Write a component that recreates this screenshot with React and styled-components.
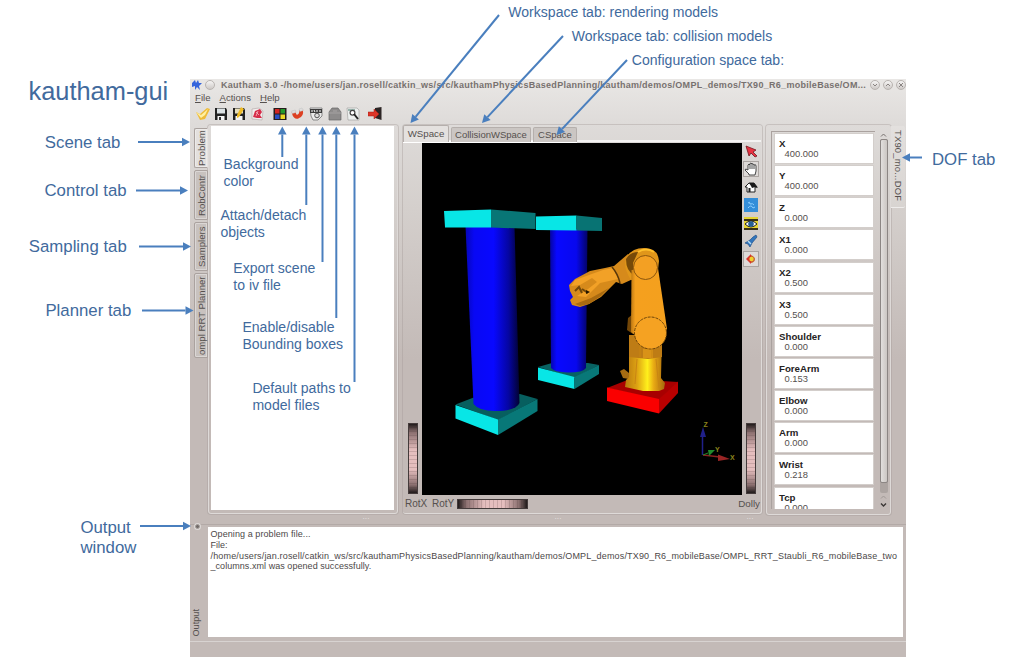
import React from 'react';
import styled, { createGlobalStyle, css } from 'styled-components';

const GlobalStyle = createGlobalStyle`
  * { box-sizing: border-box; }
  body { margin: 0; background: #fff; font-family: "Liberation Sans", Arial, sans-serif; }
`;

const Slide = styled.main`
  position: relative;
  width: 1009px;
  height: 661px;
  padding: 79px 0 0 190px;
  background: #fff;
  overflow: hidden;
`;

const Window = styled.section`
  width: 716px;
  height: 578px;
  display: flex;
  flex-direction: column;
  background: linear-gradient(#e9e7e5 0, #dedbd9 45px, #d4cfcc 130px, #c3bab7 280px, #c3bab7 100%);
  color: #55504e;
  font-size: 10px;
`;

const TitleBar = styled.header`
  height: 13px;
  display: flex;
  align-items: center;
  padding: 0 0 1px;
`;

const TitleText = styled.span`
  flex: 1;
  margin-left: 5px;
  font-size: 9px;
  line-height: 11px;
  font-weight: 700;
  letter-spacing: ${(p) => p.$track}px;
  white-space: nowrap;
  color: #77716f;
`;

const RoundButton = styled.span`
  width: 10px;
  height: 10px;
  flex: none;
  margin-right: ${(p) => p.$gap ?? 3}px;
  display: grid;
  place-items: center;
  border-radius: 50%;
  border: 1px solid #b9b4b1;
  background: linear-gradient(#f6f5f4, #cdc9c6);
`;

const MenuBar = styled.nav`
  height: 14px;
  display: flex;
  gap: 9px;
  padding-left: 5px;
  font-size: 9.6px;
  line-height: 12px;
`;

const Mnemonic = styled.span`
  text-decoration: underline;
`;

const MenuItem = styled.span`
  letter-spacing: ${(p) => p.$track || 0}px;
`;

const ToolBar = styled.div`
  height: 19px;
  display: flex;
  align-items: center;
  padding: 0 0 3px 6px;
`;

const ToolIcon = styled.svg`
  width: 14px;
  height: 14px;
  margin-right: ${(p) => p.$gap ?? 4}px;
  flex: none;
`;

const Main = styled.div`
  height: 392px;
  display: flex;
`;

const SideTabs = styled.div`
  width: 18px;
  padding: 3px 0 0 4px;
  display: flex;
  flex-direction: column;
  gap: 2px;
`;

const verticalText = css`
  writing-mode: vertical-rl;
  white-space: nowrap;
  font-size: 10px;
  line-height: 13px;
`;

const SideTab = styled.div`
  ${verticalText}
  transform: rotate(180deg);
  width: 14px;
  height: ${(p) => p.$h}px;
  font-size: 9.6px;
  text-align: center;
  letter-spacing: ${(p) => p.$track || 0}px;
  border: 1px solid #aaa29f;
  border-left-color: ${(p) => (p.$active ? '#e6e3e1' : '#aaa29f')};
  border-radius: 0 2px 2px 0;
  background: ${(p) => (p.$active ? '#e3e0de' : '#c8c2bf')};
  box-shadow: inset 0 0 0 1px rgba(255, 255, 255, 0.35);
`;

const frame = css`
  border: 1px solid #dedad8;
  box-shadow: 0 0 0 1px rgba(165, 155, 152, 0.4);
  border-radius: 3px;
`;

const ProblemPane = styled.div`
  ${frame}
  width: 190px;
  height: 389px;
  padding: 0 3px 3px 2px;
`;

const WhiteSheet = styled.div`
  width: 100%;
  height: 100%;
  background: #fff;
`;

const ViewPane = styled.div`
  ${frame}
  width: 359px;
  height: 389px;
  margin-left: 5px;
  display: flex;
  flex-direction: column;
  border-width: 0 1px 1px 0;
`;

const TabRow = styled.div`
  height: 18px;
  display: flex;
  align-items: flex-end;
  gap: 2px;
  background: linear-gradient(#fff, #fff) 0 bottom / 174px 2px no-repeat,
    linear-gradient(#f4f3f2, #f4f3f2) 0 15px / 100% 2px no-repeat;
`;

const ViewTab = styled.div`
  height: ${(p) => (p.$active ? 17 : 15)}px;
  width: ${(p) => p.$w}px;
  margin-bottom: 1px;
  font-size: ${(p) => p.$size || 9.7}px;
  line-height: ${(p) => (p.$active ? 16 : 14)}px;
  text-align: center;
  white-space: nowrap;
  border: 1px solid #b5afac;
  border-bottom: 0;
  border-radius: 2px 2px 0 0;
  background: ${(p) => (p.$active ? '#e4e1df' : '#cbc6c3')};
`;

const ViewBody = styled.div`
  display: flex;
  height: 352px;
`;

const Rail = styled.div`
  width: ${(p) => p.$w}px;
  display: flex;
  flex-direction: column;
  align-items: center;
  justify-content: space-between;
  padding-bottom: 1px;
`;

const ViewTools = styled.div`
  display: flex;
  flex-direction: column;
  gap: 2px;
`;

const ViewTool = styled.div`
  width: 16px;
  height: 16px;
  display: grid;
  place-items: center;
  border: 1px solid ${(p) => (p.$pressed ? '#aaa4a1' : 'transparent')};
  background: ${(p) => (p.$pressed ? '#dedad8' : 'transparent')};
  svg { width: 14px; height: 14px; }
`;

const ThumbWheel = styled.div`
  width: ${(p) => (p.$flat ? 71 : 10)}px;
  height: ${(p) => (p.$flat ? 10 : 71)}px;
  border: 1px solid #443b3b;
  background:
    linear-gradient(${(p) => (p.$flat ? '90deg' : '180deg')}, #211b1b 0, rgba(80, 60, 60, 0.6) 12%, transparent 38%, transparent 66%, rgba(80, 60, 60, 0.6) 88%, #211b1b 100%),
    repeating-linear-gradient(${(p) => (p.$flat ? '90deg' : '180deg')}, #e5bebe 0 3px, #c9a5a5 3px 4px);
`;

const Scene = styled.svg`
  width: 320px;
  height: 352px;
  display: block;
  background: #000;
`;

const ViewFooter = styled.div`
  flex: 1;
  display: flex;
  align-items: center;
  padding: 0 1px 1px 2px;
  font-size: 10.2px;
`;

const FooterLabel = styled.span`
  width: ${(p) => p.$w}px;
  margin-left: ${(p) => (p.$end ? 'auto' : 0)};
  font-size: ${(p) => (p.$end ? 9.8 : 10)}px;
  text-align: ${(p) => (p.$end ? 'right' : 'left')};
`;

const DofPane = styled.div`
  ${frame}
  width: 125px;
  height: 390px;
  margin-left: 4px;
  padding: 5px 2px 6px 4px;
  display: flex;
  gap: 4px;
`;

const DofList = styled.div`
  width: 105px;
  height: 378px;
  padding: 2px 2px 2px 3px;
  border: 1px solid #aaa29f;
  border-width: 1px 0 0 1px;
  display: flex;
  flex-direction: column;
  gap: 3.15px;
  overflow: hidden;
`;

const DofCard = styled.div`
  flex: none;
  height: 29px;
  padding: 4px 0 0 4px;
  background: #fff;
  box-shadow: 0 0 0 1px #d3cecb;
`;

const DofName = styled.div`
  font-size: 9.7px;
  line-height: 11px;
  font-weight: 700;
  color: #262323;
`;

const DofValue = styled.div`
  padding-left: 5.5px;
  font-size: 9.4px;
  line-height: 10px;
`;

const ScrollBar = styled.div`
  width: 9px;
  height: 378px;
  display: flex;
  flex-direction: column;
  align-items: center;
  justify-content: space-between;
`;

const ScrollTrack = styled.div`
  width: 8px;
  flex: 1;
  padding-bottom: 10px;
  border-radius: 2px;
  background: #aca4a1;
`;

const ScrollThumb = styled.div`
  height: 100%;
  border: 1px solid #8c8684;
  border-radius: 2px;
  background: linear-gradient(90deg, #e2dfdd, #cbc6c3);
`;

const Chevron = styled.svg`
  width: 7px;
  height: 6px;
  margin: 1px 0;
`;

const DofTab = styled.div`
  ${verticalText}
  width: 14px;
  height: 81px;
  margin: 1px 0 0;
  padding-top: 4px;
  font-size: 9.4px;
  letter-spacing: 0.22px;
  border-radius: 0 2px 2px 0;
  background: linear-gradient(#e3e0de, #d8d4d1);
  box-shadow: 0 1px 0 #eeeceb;
`;

const Splitter = styled.div`
  height: 8px;
  display: flex;
  justify-content: space-around;
  border-bottom: 1px solid #b3aaa7;
  padding: 0 60px 0 80px;
  font-size: 7px;
  line-height: 3px;
  color: #eeeae8;
`;

const OutputDock = styled.div`
  height: 117px;
  display: flex;
  padding: 2px 3px 4px 0;
  border-bottom: 1px solid #d8d3d1;
`;

const OutputSide = styled.div`
  width: 17.5px;
  display: flex;
  flex-direction: column;
  justify-content: space-between;
`;

const DockButton = styled.span`
  width: 5px;
  height: 5px;
  margin: -3px 0 0 4.5px;
  border-radius: 50%;
  background: #716b69;
  border: 1px solid #a39d9a;
  box-shadow: 0 0 0 1px #dcd8d6;
`;

const OutputTitle = styled.div`
  ${verticalText}
  transform: rotate(180deg);
  font-size: 9.2px;
`;

const OutputText = styled.div`
  flex: 1;
  padding: 2px 3px;
  background: #fff;
  color: #4c4848;
  font-size: 9px;
  line-height: 10.8px;
`;

const OutputLine = styled.div`
  white-space: nowrap;
  letter-spacing: ${(p) => p.$track || 0}px;
`;

const Callout = styled.div`
  position: absolute;
  left: ${(p) => p.$x}px;
  top: ${(p) => p.$y}px;
  font-size: ${(p) => p.$size}px;
  line-height: ${(p) => p.$lh}px;
  white-space: pre;
  color: #416a9d;
`;

const ArrowLayer = styled.svg`
  position: absolute;
  left: 0;
  top: 0;
  width: 1009px;
  height: 661px;
  pointer-events: none;
`;

const dofs = [
  ['X', '400.000'], ['Y', '400.000'], ['Z', '0.000'], ['X1', '0.000'],
  ['X2', '0.500'], ['X3', '0.500'], ['Shoulder', '0.000'], ['ForeArm', '0.153'],
  ['Elbow', '0.000'], ['Arm', '0.000'], ['Wrist', '0.218'], ['Tcp', '0.000'],
];

const callouts = [
  { x: 28.5, y: 75, size: 25.4, lh: 32, text: 'kautham-gui' },
  { x: 44.8, y: 132.5, size: 16.8, lh: 20, text: 'Scene tab' },
  { x: 44.5, y: 180.5, size: 16.8, lh: 20, text: 'Control tab' },
  { x: 28.8, y: 237, size: 16.8, lh: 20, text: 'Sampling tab' },
  { x: 45.4, y: 300.5, size: 16.8, lh: 20, text: 'Planner tab' },
  { x: 80.4, y: 517.5, size: 16.8, lh: 20, text: 'Output\nwindow' },
  { x: 932, y: 149.5, size: 16.8, lh: 20, text: 'DOF tab' },
  { x: 508.3, y: 4, size: 14.05, lh: 17, text: 'Workspace tab: rendering models' },
  { x: 571.8, y: 28, size: 14.05, lh: 17, text: 'Workspace tab: collision models' },
  { x: 631.8, y: 52, size: 14.05, lh: 17, text: 'Configuration space tab:' },
  { x: 223.5, y: 156, size: 14.05, lh: 17, text: 'Background\ncolor' },
  { x: 220.4, y: 207, size: 14.05, lh: 17, text: 'Attach/detach\nobjects' },
  { x: 233.3, y: 259.5, size: 14.05, lh: 17, text: 'Export scene\nto iv file' },
  { x: 242.4, y: 319, size: 14.05, lh: 17, text: 'Enable/disable\nBounding boxes' },
  { x: 252.4, y: 379.5, size: 14.05, lh: 17, text: 'Default paths to\nmodel files' },
];

const arrows = [
  [138, 142, 190, 142], [136, 190.5, 188, 190.5], [139, 246.5, 191, 246.5],
  [142, 310.5, 193.5, 310.5], [140, 526, 191, 526], [922, 157.5, 902, 157.5],
  [499, 15, 410.5, 123], [563, 36, 482, 123], [627, 60, 556.5, 135],
  [282.3, 157, 282.3, 126.5], [306.3, 205, 306.3, 126.5], [322.5, 262, 322.5, 126.5],
  [336.3, 318, 336.3, 126.5], [354.5, 382, 354.5, 126.5],
];

function Arrow({ from }) {
  const [x1, y1, x2, y2] = from;
  const len = Math.hypot(x2 - x1, y2 - y1);
  const ux = (x2 - x1) / len;
  const uy = (y2 - y1) / len;
  const bx = x2 - ux * 8;
  const by = y2 - uy * 8;
  return (
    <g>
      <line x1={x1} y1={y1} x2={bx} y2={by} stroke="#4a7fbe" strokeWidth="2" />
      <polygon fill="#4a7fbe" points={`${x2},${y2} ${bx - uy * 4.3},${by + ux * 4.3} ${bx + uy * 4.3},${by - ux * 4.3}`} />
    </g>
  );
}

function ToolbarIcons() {
  return (
    <>
      <ToolIcon viewBox="0 0 14 14" $gap={4}>
        <path d="M0 5 L4 7 L11 1 L14 2 L9 12 L4 13 Z" fill="#eebb38" />
        <path d="M0 5 L5 8 L12 2 L9 8 L5 11 Z" fill="#fff0a2" />
      </ToolIcon>
      <ToolIcon viewBox="0 0 14 14">
        <path d="M1 1H12L13 3V13H1Z" fill="#222" />
        <rect x="3" y="1.5" width="8" height="5" fill="#dce2e4" />
        <rect x="3.5" y="9" width="7" height="4" fill="#f5f5f5" />
        <rect x="5" y="10" width="2" height="3" fill="#333" />
      </ToolIcon>
      <ToolIcon viewBox="0 0 14 14">
        <path d="M1 1H12L13 3V13H1Z" fill="#222" />
        <rect x="3" y="1.5" width="8" height="5" fill="#e7dfbd" />
        <rect x="3.500" y="9" width="7" height="4" fill="#f5f5f5" />
        <path d="M9 0L12 2L7 10L5 11L5 8Z" fill="#f0bc25" />
      </ToolIcon>
      <ToolIcon viewBox="0 0 14 14" $gap={9}>
        <path d="M2 2L9 1L13 4L12 13L2 12Z" fill="#f1eded" stroke="#b8aeae" strokeWidth=".7" />
        <path d="M5 4L10 2L12 5L10 8L12 11L7 11L3 10L4 7Z" fill="#d62d49" />
        <path d="M6 5L9 8M8 4L6 9" stroke="#f6b9c2" strokeWidth=".8" />
      </ToolIcon>
      <ToolIcon viewBox="0 0 14 14">
        <rect x=".5" y="1" width="13" height="12" fill="#241c1c" />
        <rect x="2" y="2" width="4.500" height="4.500" fill="#d32522" />
        <rect x="7.500" y="2" width="4.500" height="4.500" fill="#239a2b" />
        <rect x="2" y="7.500" width="4.500" height="4.500" fill="#294fc4" />
        <rect x="7.500" y="7.500" width="4.500" height="4.500" fill="#ead825" />
      </ToolIcon>
      <ToolIcon viewBox="0 0 14 14">
        <path d="M2.500 5Q4 11 7 9.500Q11 8 10 3" fill="none" stroke="#dd4022" strokeWidth="3.800" />
        <path d="M.5 4L4.300 3L5 5.500L1.200 6.600ZM8 2L11 1L12.500 3.400L8.800 4.500Z" fill="#ddd" stroke="#bbb" strokeWidth=".4" />
      </ToolIcon>
      <ToolIcon viewBox="0 0 14 14" $gap={5}>
        <path d="M1 1H13V9L9 13H4L2 9Z" fill="#ebebeb" stroke="#888" />
        <path d="M1 2H13V6H1Z" fill="#3b3b3b" />
        <path d="M3 3V5M5 3L6 5M8 3V5M11 3V5" stroke="#fff" />
        <circle cx="8" cy="8.500" r="2.300" fill="#ddd" stroke="#555" />
      </ToolIcon>
      <ToolIcon viewBox="0 0 14 14">
        <path d="M4 1H10L13 5V13H1V5Z" fill="#8d8b8b" stroke="#696767" strokeWidth=".7" />
        <path d="M1 6H13M5 4H9" stroke="#a6a3a3" />
      </ToolIcon>
      <ToolIcon viewBox="0 0 14 14" $gap={8}>
        <path d="M1 1H11L13 3V13H2Z" fill="#edf0ef" stroke="#9b9b98" strokeWidth=".6" />
        <path d="M2 3H9" stroke="#7a9f94" strokeWidth="1.500" />
        <circle cx="6.500" cy="5.800" r="2.400" fill="#fff" stroke="#444" strokeWidth="1.200" />
        <path d="M8 7L12 12" stroke="#222" strokeWidth="2" />
      </ToolIcon>
      <ToolIcon viewBox="0 0 14 14">
        <path d="M7 1L13.500 0V13L7 11Z" fill="#2c2525" />
        <path d="M0 5H6V2L11 7L6 12V9H0Z" fill="#dd3528" stroke="#a51d17" strokeWidth=".5" />
      </ToolIcon>
    </>
  );
}

function ViewerTools() {
  return (
    <ViewTools>
      <ViewTool>
        <svg viewBox="0 0 14 14"><path d="M2 2L12 6L9 8L13 12L11 13L7 9L5 12Z" fill="#e83241" stroke="#6e1820" strokeWidth=".8" /></svg>
      </ViewTool>
      <ViewTool $pressed>
        <svg viewBox="0 0 14 14"><path d="M5 12L1 8Q1 6 4 8V3Q5 1 6 3V1.500Q7 .3 8 2Q9 .8 10 3Q12 2 12 4V9L11 13H5ZM6 3V7M8 2V7M10 3V7" fill="#fff" stroke="#333" strokeWidth=".9" /></svg>
      </ViewTool>
      <ViewTool>
        <svg viewBox="0 0 14 14"><path d="M1 7L5 3H10L13 7L11 7V12H3V7Z" fill="#fff" stroke="#222" /><path d="M5 3H10L14 8L11 7L8 8L7 6Z" fill="#181818" /><rect x="4.500" y="8" width="2" height="4" fill="#222" /></svg>
      </ViewTool>
      <ViewTool>
        <svg viewBox="0 0 14 14"><rect width="14" height="14" fill="#348ed9" /><path d="M4 5Q6 3 6 6Q9 5 10 7M4 10Q7 6 9 10L11 9" fill="none" stroke="#8fd0ff" /></svg>
      </ViewTool>
      <ViewTool>
        <svg viewBox="0 0 14 14"><rect y="1" width="14" height="12" fill="#e5d331" /><path d="M0 3H14V5H0ZM0 12H14V14H0Z" fill="#373015" /><path d="M1 8Q7 2 13 8Q7 14 1 8Z" fill="#fff" stroke="#222" /><circle cx="7" cy="8" r="2.800" fill="#245f96" /></svg>
      </ViewTool>
      <ViewTool>
        <svg viewBox="0 0 14 14"><path d="M12 1L13 3L8 9L6 13L4 10L1 9L6 6L9 3Z" fill="#3176bd" stroke="#235086" strokeWidth=".7" /><path d="M4 7L7 10" stroke="#b6dcf4" strokeWidth="1.500" /></svg>
      </ViewTool>
      <ViewTool $pressed>
        <svg viewBox="0 0 14 14"><path d="M2 7L7 2V12Z" fill="#d9352c" /><path d="M7 3Q11 5 11 7Q11 10 7 11Z" fill="#c9602e" /><circle cx="7.500" cy="7" r="2.200" fill="#efd22f" /></svg>
      </ViewTool>
    </ViewTools>
  );
}

function RobotScene() {
  return (
    <Scene viewBox="422 143 320 352">
      <defs>
        <linearGradient id="shaft" x1="0" x2="1">
          <stop offset="0" stopColor="#0606b8" />
          <stop offset=".16" stopColor="#0808f4" />
          <stop offset=".52" stopColor="#0808ff" />
          <stop offset=".8" stopColor="#0505a0" />
          <stop offset="1" stopColor="#020230" />
        </linearGradient>
        <linearGradient id="shaftBack" x1="0" x2="1">
          <stop offset="0" stopColor="#0505a0" />
          <stop offset=".18" stopColor="#0808ff" />
          <stop offset=".7" stopColor="#0808ee" />
          <stop offset="1" stopColor="#030366" />
        </linearGradient>
        <linearGradient id="pedestal" x1="0" x2="1">
          <stop offset="0" stopColor="#b8780e" />
          <stop offset=".3" stopColor="#dda213" />
          <stop offset=".56" stopColor="#fff01c" />
          <stop offset=".72" stopColor="#e8a914" />
          <stop offset="1" stopColor="#a4660c" />
        </linearGradient>
        <linearGradient id="arm" x1="0" x2="1">
          <stop offset="0" stopColor="#bd7813" />
          <stop offset=".12" stopColor="#f5a01e" />
          <stop offset="1" stopColor="#f4a01e" />
        </linearGradient>
      </defs>

      <polygon points="538,367 552,363 588,363 599,365 574.500,378" fill="#086262" />
      <path d="M550 229H587.500L586 368Q583 372.500 568 372.500Q554 372 551 368Z" fill="url(#shaftBack)" />
      <polygon points="538,367.500 574.500,377 574.500,389 538,380" fill="#08e6e6" />
      <polygon points="574.500,377 599,365 599,374 574.500,389" fill="#087878" />
      <polygon points="536,216.500 576.500,215.500 576.500,230.500 536,230" fill="#08e6e6" />
      <polygon points="576.500,215.500 602,218 602,231 576.500,230.500" fill="#087373" />

      <polygon points="455.500,404.500 475,397 520,394 537.500,399 498,420" fill="#075f5f" />
      <path d="M465.500 226H514.500L519.500 403Q516 411 495 411Q479 411 473.500 404Z" fill="url(#shaft)" />
      <polygon points="455.500,405 498,419.500 498,435 455.500,418.500" fill="#08e6e6" />
      <polygon points="498,419.500 537.500,399 537.500,411 498,435" fill="#087878" />
      <polygon points="444,211 491,209.500 491,227.500 445,227.500" fill="#08e6e6" />
      <polygon points="491,209.500 535.500,213 535.500,229 491,227.500" fill="#087676" />

      <polygon points="607,388 630,379 678,382 659,400" fill="#a80000" />
      <polygon points="607,387.500 659,399 659,413.500 607,401" fill="#fa0000" />
      <polygon points="659,399 678,381.500 678,393 659,413.500" fill="#b90000" />
      <path d="M620 371L624 369L629 373V379L623 378Z" fill="#a66c12" />
      <path d="M629 335H662L661 378L665 383L664 389L659 391H643L625 387L626 380L629 377Z" fill="url(#pedestal)" />
      <path d="M629 335H662V357L648 359L629 357Z" fill="#be7c15" />
      <path d="M643 349H653V358H643Z" fill="#d89218" />
      <path d="M640 345V357M652 349V358M637 359L635 384M656 359L659 388" stroke="#c98513" />
      <path d="M628 318L633 314V334L627 330Z" fill="#734607" />

      <path d="M569 285L575 279L590 271L605 268L614 266L628 254L641 262L633 279L622 284L616 282L601 297L589 304L580 307L572 305L570 300L573 297L570 291Z" fill="#d68a1b" />
      <path d="M575 280L603 270L613 268L618 279L600 283L586 297L577 296L588 289L597 282L592 278L580 285L571 286Z" fill="#f2a127" />
      <path d="M575 304L591 298L609 288L601 296L589 304L580 306Z" fill="#aa6b10" />
      <path d="M575 291L579 287L582 293M582 289L588 293" fill="none" stroke="#70470a" strokeWidth="2" />
      <path d="M586 290L590 292L586 294Z" fill="#221500" />
      <path d="M612 267Q618 274 620 283" fill="none" stroke="#58370a" strokeWidth="1.500" />
      <path d="M625 263Q628 248 644 248Q658 248 659 261L657 278L631 280Q625 271 625 263Z" fill="#e0961a" />
      <path d="M626 259Q630 252 638 252L633 263L634 275Q626 271 626 259Z" fill="#774a08" />
      <path d="M631.500 270L658 268L667 329L651 348L631 332Z" fill="url(#arm)" />
      <circle cx="645.500" cy="267.500" r="12" fill="#f3a023" stroke="#8c560e" />
      <circle cx="650.500" cy="333" r="16" fill="#f5a222" stroke="#6e450b" strokeDasharray="3 1" />
      <path d="M638 252Q646 247 654 252" fill="none" stroke="#ffc02c" strokeWidth="2" />

      <path d="M702.500 455V435" stroke="#20208a" strokeWidth="1.500" />
      <polygon points="703,427 700,437 706,437" fill="#20208a" />
      <path d="M703 455L720 457" stroke="#8c2222" strokeWidth="1.500" />
      <polygon points="730,459 718,454.500 718,461" fill="#9a2525" />
      <path d="M703 455L708 453" stroke="#218a2b" />
      <polygon points="715,450 708,450 709,456" fill="#218a2b" />
      <g fill="#8c841d" fontFamily="Liberation Sans" fontSize="7" fontWeight="700">
        <text x="703.500" y="427">Z</text>
        <text x="715" y="452">Y</text>
        <text x="730" y="460">X</text>
      </g>
    </Scene>
  );
}

export default function App() {
  return (
    <Slide>
      <GlobalStyle />
      <Window>
        <TitleBar>
          <ToolIcon viewBox="0 0 14 14" $gap={1}>
            <path d="M2 5L5 2L6 5L8 2L9 5L12 5L9 8L10 12L7 9L5 12L5 8L2 9Z" fill="#3565dc" />
          </ToolIcon>
          <RoundButton $gap={1} />
          <TitleText $track={0.29}>
            Kautham 3.0 -/home/users/jan.rosell/catkin_ws/src/kauthamPhysicsBasedPlanning/kautham/demos/OMPL_demos/TX90_R6_mobileBase/OM...
          </TitleText>
          {['M1 2L3 4L5 2', 'M1 4L3 2L5 4', 'M1 1L5 5M5 1L1 5'].map((d, i) => (
            <RoundButton key={d} $gap={i === 2 ? 0 : 3}>
              <svg width="6" height="6"><path d={d} fill="none" stroke="#8a8482" /></svg>
            </RoundButton>
          ))}
        </TitleBar>
        <MenuBar>
          <MenuItem><Mnemonic>F</Mnemonic>ile</MenuItem>
          <MenuItem><Mnemonic>A</Mnemonic>ctions</MenuItem>
          <MenuItem><Mnemonic>H</Mnemonic>elp</MenuItem>
        </MenuBar>
        <ToolBar><ToolbarIcons /></ToolBar>
        <Main>
          <SideTabs>
            <SideTab $active $h={40}>Problem</SideTab>
            <SideTab $h={50}>RobContr</SideTab>
            <SideTab $h={49}>Samplers</SideTab>
            <SideTab $h={85}>ompl RRT Planner</SideTab>
          </SideTabs>
          <ProblemPane><WhiteSheet /></ProblemPane>
          <ViewPane>
            <TabRow>
              <ViewTab $active $w={46}>WSpace</ViewTab>
              <ViewTab $w={80} $size={9.5}>CollisionWSpace</ViewTab>
              <ViewTab $w={44} $size={9.5}>CSpace</ViewTab>
            </TabRow>
            <ViewBody>
              <Rail $w={19}><span /><ThumbWheel /></Rail>
              <RobotScene />
              <Rail $w={18}><ViewerTools /><ThumbWheel /></Rail>
            </ViewBody>
            <ViewFooter>
              <FooterLabel $w={27}>RotX</FooterLabel>
              <FooterLabel $w={25}>RotY</FooterLabel>
              <ThumbWheel $flat />
              <FooterLabel $w={30} $end>Dolly</FooterLabel>
            </ViewFooter>
          </ViewPane>
          <DofPane>
            <DofList>
              {dofs.map(([name, value]) => (
                <DofCard key={name}>
                  <DofName>{name}</DofName>
                  <DofValue>{value}</DofValue>
                </DofCard>
              ))}
            </DofList>
            <ScrollBar>
              <Chevron viewBox="0 0 7 6"><path d="M1 4.500L3.500 2L6 4.500" fill="none" stroke="#77716f" /></Chevron>
              <ScrollTrack><ScrollThumb /></ScrollTrack>
              <Chevron viewBox="0 0 7 6"><path d="M1 4.500L3.500 2L6 4.500" fill="none" stroke="#a09996" /></Chevron>
              <Chevron viewBox="0 0 7 6"><path d="M1 1.500L3.500 4L6 1.500" fill="none" stroke="#3c3837" strokeWidth="1.400" /></Chevron>
            </ScrollBar>
          </DofPane>
          <DofTab>TX90_mo...DOF</DofTab>
        </Main>
        <Splitter><span>···</span><span>···</span><span>···</span></Splitter>
        <OutputDock>
          <OutputSide><DockButton /><OutputTitle>Output</OutputTitle></OutputSide>
          <OutputText>
            <OutputLine $track={0.08}>Opening a problem file...</OutputLine>
            <OutputLine>File:</OutputLine>
            <OutputLine $track={0.16}>/home/users/jan.rosell/catkin_ws/src/kauthamPhysicsBasedPlanning/kautham/demos/OMPL_demos/TX90_R6_mobileBase/OMPL_RRT_Staubli_R6_mobileBase_two</OutputLine>
            <OutputLine $track={0.05}>_columns.xml was opened successfully.</OutputLine>
          </OutputText>
        </OutputDock>
      </Window>
      {callouts.map((c) => (
        <Callout key={c.text} $x={c.x} $y={c.y} $size={c.size} $lh={c.lh}>{c.text}</Callout>
      ))}
      <ArrowLayer viewBox="0 0 1009 661">
        {arrows.map((a) => <Arrow key={a.join()} from={a} />)}
      </ArrowLayer>
    </Slide>
  );
}
